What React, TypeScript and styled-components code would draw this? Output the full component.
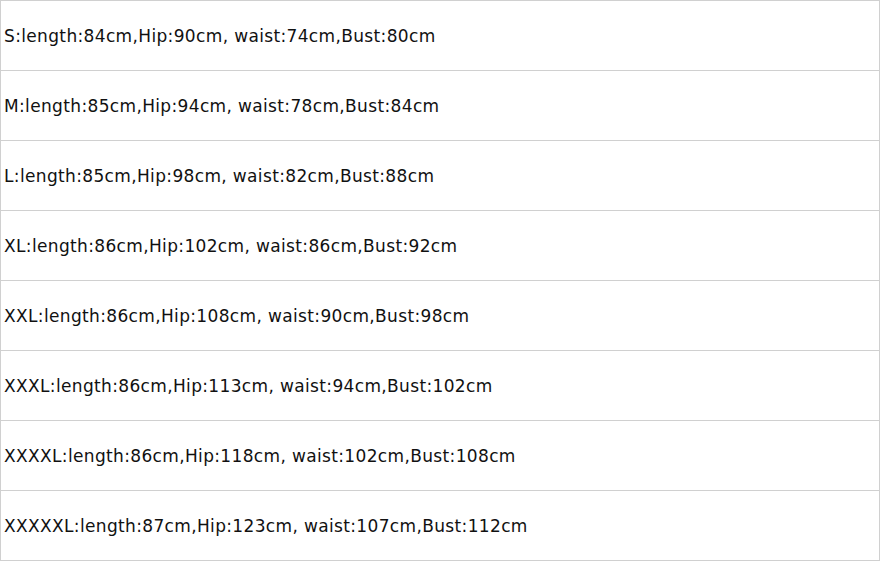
import * as React from "react";
import styled, { createGlobalStyle } from "styled-components";

const GlobalStyle = createGlobalStyle`
    html, body {
        margin: 0;
        padding: 0;
        background: #ffffff;
    }
`;

const Table = styled.div`
    width: 880px;
    display: flex;
    flex-direction: column;
    border-right: 1px solid #d0d0d0;
    border-left: 1px solid #d0d0d0;
    border-bottom: 1px solid #d0d0d0;
    box-sizing: border-box;
`;

const Row = styled.div`
    height: 70px;
    box-sizing: border-box;
    border-top: 1px solid #d0d0d0;
    display: flex;
    align-items: center;
    padding-left: 3px;
    font-family: "DejaVu Sans", Verdana, sans-serif;
    font-size: 17px;
    letter-spacing: 0.35px;
    color: #111111;
    white-space: nowrap;
`;

const sizes = [
    "S:length:84cm,Hip:90cm, waist:74cm,Bust:80cm",
    "M:length:85cm,Hip:94cm, waist:78cm,Bust:84cm",
    "L:length:85cm,Hip:98cm, waist:82cm,Bust:88cm",
    "XL:length:86cm,Hip:102cm, waist:86cm,Bust:92cm",
    "XXL:length:86cm,Hip:108cm, waist:90cm,Bust:98cm",
    "XXXL:length:86cm,Hip:113cm, waist:94cm,Bust:102cm",
    "XXXXL:length:86cm,Hip:118cm, waist:102cm,Bust:108cm",
    "XXXXXL:length:87cm,Hip:123cm, waist:107cm,Bust:112cm",
];

export default function App() {
    return (
        <>
            <GlobalStyle />
            <Table>
                {sizes.map((s) => (
                    <Row key={s}>{s}</Row>
                ))}
            </Table>
        </>
    );
}
